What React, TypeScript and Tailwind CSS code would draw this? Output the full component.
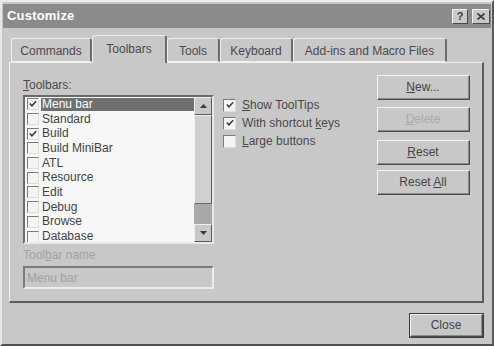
import React from "react";

const toolbars = [
  { name: "Menu bar", checked: true, selected: true },
  { name: "Standard", checked: false },
  { name: "Build", checked: true },
  { name: "Build MiniBar", checked: false },
  { name: "ATL", checked: false },
  { name: "Resource", checked: false },
  { name: "Edit", checked: false },
  { name: "Debug", checked: false },
  { name: "Browse", checked: false },
  { name: "Database", checked: false },
];

const Check = ({ className = "" }: { className?: string }) => (
  <svg viewBox="0 0 11 11" className={className}>
    <path d="M2 5 L4.3 7.5 L9 2.5" fill="none" stroke="#3a3a3a" strokeWidth="1.7" />
  </svg>
);

const Box = ({ checked, size = "w-[12px] h-[12px]" }: { checked: boolean; size?: string }) => (
  <span
    className={`${size} shrink-0 bg-[#f4f4f4] border border-t-[#7a7a7a] border-l-[#7a7a7a] border-r-[#dcdcdc] border-b-[#dcdcdc] flex items-center justify-center`}
  >
    {checked && <Check className="w-[10px] h-[10px]" />}
  </span>
);

const Button = ({
  children,
  disabled,
  className = "",
}: {
  children: React.ReactNode;
  disabled?: boolean;
  className?: string;
}) => (
  <div
    className={`h-[25px] border border-t-[#f2f2f2] border-l-[#f2f2f2] border-r-[#4a4a4a] border-b-[#4a4a4a] ${className}`}
  >
    <div
      className={`h-full flex items-center justify-center border-r border-b border-r-[#8a8a8a] border-b-[#8a8a8a] ${
        disabled ? "text-[#a8a8a8]" : "text-[#444]"
      }`}
    >
      <span>{children}</span>
    </div>
  </div>
);

const Tab = ({ label, width, active }: { label: string; width: string; active?: boolean }) => (
  <div
    className={`${width} flex items-center justify-center rounded-t-[3px] border-t border-l border-t-[#f0f0f0] border-l-[#f0f0f0] border-r-2 border-r-[#6c6c6c] text-[#4a4a4a] ${
      active ? "h-[28px] -mb-px relative z-10 bg-[#c8c8c8] pb-[1px]" : "h-[24px] pt-[2px] border-b border-b-[#f0f0f0]"
    }`}
  >
    {label}
  </div>
);

const Arrow = ({ up }: { up?: boolean }) => (
  <svg viewBox="0 0 7 4" className="w-[7px] h-[4px]">
    <path d={up ? "M0 4 L3.5 0 L7 4 Z" : "M0 0 L3.5 4 L7 0 Z"} fill="#3a3a3a" />
  </svg>
);

export default function App() {
  return (
    <div className="w-[494px] h-[346px] overflow-hidden bg-[#c8c8c8] font-['Liberation_Sans',Arial,sans-serif] text-[12px] text-[#444] border-2 border-t-[#ececec] border-l-[#e6e6e6] border-r-[#5a5a5a] border-b-[#505050] pt-[2px] px-px">
      {/* Title bar */}
      <div className="h-[24px] bg-[#8b8b8b] flex items-center justify-between pl-[4px] pr-px">
        <span className="text-white font-bold text-[13px] tracking-[0.2px]">Customize</span>
        <div className="flex gap-[4px] mt-px">
          <div className="w-[16px] h-[15px] bg-[#c9c9c9] border border-t-[#f0f0f0] border-l-[#f0f0f0] border-r-[#4a4a4a] border-b-[#4a4a4a] flex items-center justify-center font-bold text-[11px] text-[#3a3a3a] leading-none">
            ?
          </div>
          <div className="w-[18px] h-[15px] bg-[#c9c9c9] border border-t-[#f0f0f0] border-l-[#f0f0f0] border-r-[#4a4a4a] border-b-[#4a4a4a] flex items-center justify-center">
            <svg viewBox="0 0 8 7" className="w-[8px] h-[7px]">
              <path d="M0.5 0.5 L7.5 6.5 M7.5 0.5 L0.5 6.5" stroke="#3a3a3a" strokeWidth="1.6" />
            </svg>
          </div>
        </div>
      </div>

      <div className="px-[6px]">
        {/* Tabs */}
        <div className="flex items-end pl-[2px] mt-[7px] h-[27px]">
          <Tab label="Commands" width="w-[81px]" />
          <Tab label="Toolbars" width="w-[75px]" active />
          <Tab label="Tools" width="w-[53px]" />
          <Tab label="Keyboard" width="w-[73px]" />
          <Tab label="Add-ins and Macro Files" width="w-[154px]" />
        </div>

        {/* Panel */}
        <div className="w-[475px] h-[241px] border-t border-l border-t-[#f0f0f0] border-l-[#f0f0f0] border-r-2 border-b-2 border-r-[#5c5c5c] border-b-[#5c5c5c] flex">
          {/* Left column */}
          <div className="pl-[13px] pt-[15px] w-[204px] shrink-0">
            <div className="h-[14px] leading-[14px] text-[#4a4a4a]">
              <span className="underline">T</span>oolbars:
            </div>
            <div className="mt-[3px] w-[191px] h-[149px] border-2 border-t-[#6a6a6a] border-l-[#6a6a6a] border-r-[#e8e8e8] border-b-[#e8e8e8] bg-[#f7f7f7] flex">
              <div className="flex-1 pl-[2px] overflow-hidden">
                {toolbars.map((t) => (
                  <div key={t.name} className="h-[14.7px] flex items-center">
                    <Box checked={t.checked} size="w-[12px] h-[12px]" />
                    <span
                      className={`ml-[2px] flex-1 h-[13px] leading-[13px] pl-px ${
                        t.selected ? "bg-[#707070] text-white" : "text-[#444]"
                      }`}
                    >
                      {t.name}
                    </span>
                  </div>
                ))}
              </div>
              {/* Scrollbar */}
              <div className="w-[18px] flex flex-col bg-[#b4b4b4]">
                <div className="h-[18px] bg-[#c8c8c8] border border-t-[#f0f0f0] border-l-[#f0f0f0] border-r-[#5a5a5a] border-b-[#5a5a5a] flex items-center justify-center">
                  <Arrow up />
                </div>
                <div className="h-[89px] bg-[#d0d0d0] border border-t-[#f0f0f0] border-l-[#f0f0f0] border-r-[#5a5a5a] border-b-[#6a6a6a]" />
                <div className="flex-1 bg-[#a9a9a9]" />
                <div className="h-[18px] bg-[#c8c8c8] border border-t-[#f0f0f0] border-l-[#f0f0f0] border-r-[#5a5a5a] border-b-[#5a5a5a] flex items-center justify-center">
                  <Arrow />
                </div>
              </div>
            </div>
            <div className="mt-[4px] h-[14px] leading-[14px] text-[#a2a2a2]">
              Tool<span className="underline">b</span>ar name
            </div>
            <div className="mt-[4px] w-[191px] h-[23px] border-2 border-t-[#7a7a7a] border-l-[#7a7a7a] border-r-[#ededed] border-b-[#ededed] bg-[#c8c8c8] flex items-center pl-[2px] text-[#a0a0a0]">
              Menu bar
            </div>
          </div>

          {/* Options */}
          <div className="pl-[9px] pt-[33px] flex flex-col">
            <label className="h-[18px] flex items-center gap-[6px]">
              <Box checked size="w-[13px] h-[13px]" />
              <span className="text-[#4a4a4a]">
                <span className="underline">S</span>how ToolTips
              </span>
            </label>
            <label className="h-[18px] flex items-center gap-[6px]">
              <Box checked size="w-[13px] h-[13px]" />
              <span className="text-[#4a4a4a]">
                With shortcut <span className="underline">k</span>eys
              </span>
            </label>
            <label className="h-[18px] flex items-center gap-[6px]">
              <Box checked={false} size="w-[13px] h-[13px]" />
              <span className="text-[#4a4a4a]">
                <span className="underline">L</span>arge buttons
              </span>
            </label>
          </div>

          {/* Buttons */}
          <div className="ml-auto pr-[12px] pt-[12px] w-[105px] flex flex-col">
            <Button>
              <span className="underline">N</span>ew...
            </Button>
            <Button disabled className="mt-[7px]">
              <span className="underline">D</span>elete
            </Button>
            <Button className="mt-[8px]">
              <span className="underline">R</span>eset
            </Button>
            <Button className="mt-[5px]">
              Reset <span className="underline">A</span>ll
            </Button>
          </div>
        </div>

        {/* Close */}
        <div className="w-[475px] flex justify-end mt-[10px]">
          <div className="w-[75px] h-[25px] border border-[#3a3a3a]">
            <Button className="h-full">Close</Button>
          </div>
        </div>
      </div>
    </div>
  );
}
